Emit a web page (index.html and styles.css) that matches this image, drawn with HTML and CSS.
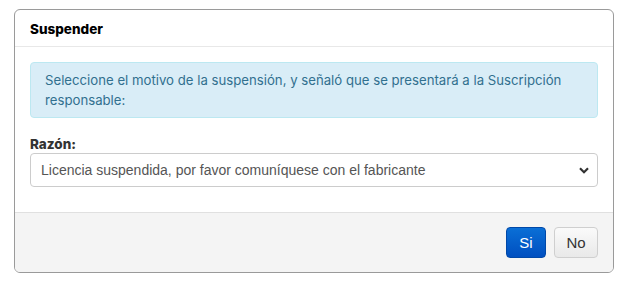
FILE: index.html
```html
<!DOCTYPE html>
<html lang="es">
<head>
<meta charset="utf-8">
<title>Suspender</title>
<link rel="stylesheet" href="styles.css">
</head>
<body>
<div class="modal">
  <div class="modal-header">
    <h4 class="modal-title">Suspender</h4>
  </div>
  <div class="modal-body">
    <div class="alert">Seleccione el motivo de la suspensión, y señaló que se presentará a la Suscripción responsable:</div>
    <label class="label" for="razon">Razón:</label>
    <div class="select-wrap">
      <select id="razon" class="select">
        <option>Licencia suspendida, por favor comuníquese con el fabricante</option>
      </select>
      <svg class="chevron" width="10" height="7" viewBox="0 0 10 7"><path d="M1 1.2 L5 5.2 L9 1.2" fill="none" stroke="#333" stroke-width="2.2"/></svg>
    </div>
  </div>
  <div class="modal-footer">
    <button class="btn btn-primary">Si</button>
    <button class="btn btn-default">No</button>
  </div>
</div>
</body>
</html>
```
FILE: styles.css
```css
html, body { margin: 0; padding: 0; background: #fff; }
body { padding: 9px 0 0 14px; }
.modal {
  width: 598px;
  border: 1px solid #9a9a9a;
  border-radius: 6px;
  background: #fff;
  overflow: hidden;
  font-family: Inter, "Liberation Sans", sans-serif;
}
.modal-header {
  height: 36px;
  border-bottom: 1px solid #e8e8e8;
  padding: 0 15px;
  display: flex;
  align-items: center;
}
.modal-title {
  margin: 0;
  font-size: 13.5px;
  font-weight: 800;
  color: #000;
  padding-top: 1px;
}
.modal-body {
  padding: 15px 15px 25px 15px;
}
.alert {
  background: #d9edf7;
  border: 1px solid #bce8f1;
  border-radius: 4px;
  color: #31708f;
  font-size: 13.2px;
  line-height: 20px;
  padding: 7px 14px;
  margin-bottom: 17px;
}
.label {
  display: block;
  font-size: 13.5px;
  font-weight: 800;
  color: #333;
  line-height: 18px;
  margin-bottom: 0;
}
.select-wrap {
  position: relative;
}
.select {
  display: block;
  width: 100%;
  height: 34px;
  box-sizing: border-box;
  appearance: none;
  -webkit-appearance: none;
  border: 1px solid #ccc;
  border-radius: 4px;
  background: #fff;
  padding: 0 10px;
  font-family: "Liberation Sans", Arial, sans-serif;
  font-size: 14px;
  color: #555;
}
.chevron {
  position: absolute;
  right: 9px;
  top: 14px;
}
.modal-footer {
  background: #f4f4f4;
  border-top: 1px solid #e0e0e0;
  padding: 14px 15px 14px 15px;
  display: flex;
  justify-content: flex-end;
  gap: 8px;
}
.btn {
  height: 31px;
  box-sizing: border-box;
  border-radius: 4px;
  font-family: "Liberation Sans", Arial, sans-serif;
  font-size: 15px;
  padding: 0;
  cursor: pointer;
}
.btn-primary {
  width: 40px;
  color: #fff;
  border: 1px solid #0048a8;
  background: linear-gradient(#0a6fd6, #004fc0);
}
.btn-default {
  width: 44px;
  color: #333;
  border: 1px solid #cfcfcf;
  background: linear-gradient(#fafafa, #e9e9e9);
}
```
